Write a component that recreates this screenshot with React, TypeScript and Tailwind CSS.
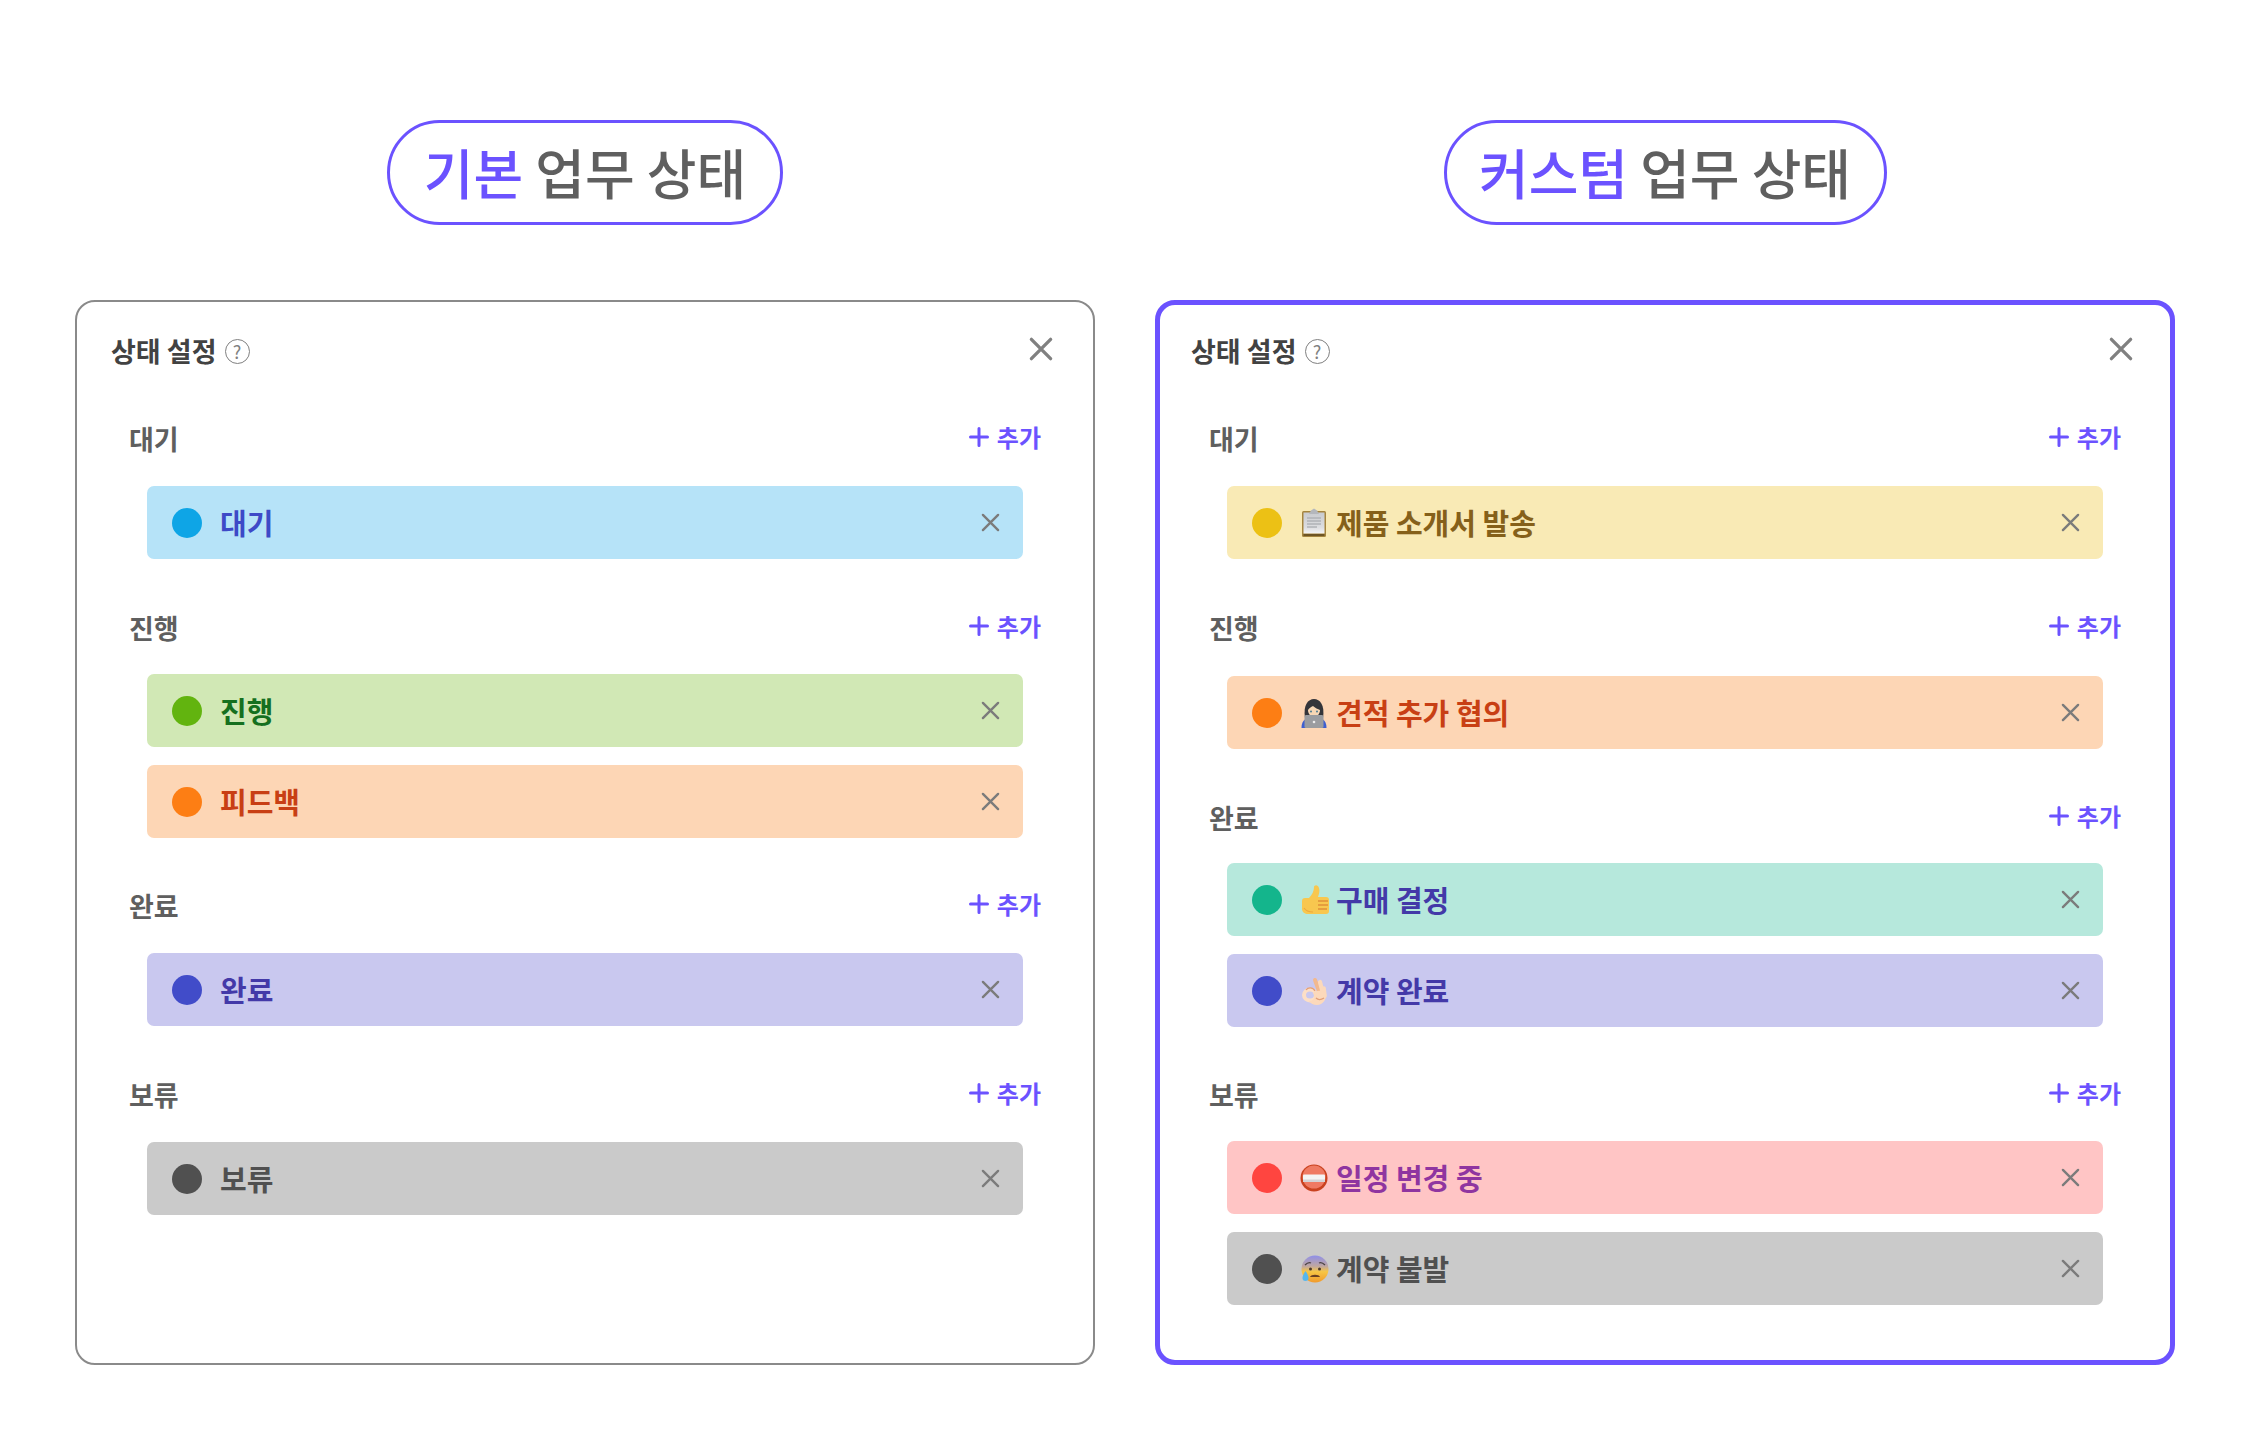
import React from "react";

const FONT = "[font-family:'Noto_Sans_CJK_KR','Noto_Sans',sans-serif]";

function XIcon({ size, stroke, color }: { size: number; stroke: number; color: string }) {
  return (
    <svg width={size} height={size} viewBox="0 0 20 20" fill="none" stroke={color} strokeWidth={stroke} strokeLinecap="round">
      <path d="M2 2 18 18M18 2 2 18" />
    </svg>
  );
}

function Clipboard() {
  return (
    <svg width="28" height="32" viewBox="0 0 28 32">
      <defs>
        <linearGradient id="clip" x1="0" y1="0" x2="0" y2="1">
          <stop offset="0" stopColor="#c9cbcf" />
          <stop offset="0.700" stopColor="#dcdde0" />
          <stop offset="1" stopColor="#f4f4f6" />
        </linearGradient>
      </defs>
      <rect x="2" y="4" width="24" height="26" rx="1.500" fill="#a5853f" />
      <rect x="3.500" y="5.500" width="21" height="21" fill="url(#clip)" />
      <path d="M3.500 27h21v2h-21z" fill="#6e5524" />
      <path d="M7 11h14M7 14h14M7 17h14M7 20h10" stroke="#b0b2b6" strokeWidth="1.300" />
      <path d="M9 7 11 3.500 14 1.500 17 3.500 19 7Z" fill="#b4b7bc" />
    </svg>
  );
}

function Laptop() {
  return (
    <svg width="28" height="32" viewBox="0 0 28 32">
      <path d="M5 21C3 8 8 2 14 2s11 6 9 19Z" fill="#34353a" />
      <path d="M8 13c1-2 3-3 5-4 2 2 5 3 7 4 0 4-3 7-6 7s-6-3-6-7Z" fill="#f7d7b5" />
      <circle cx="11" cy="14.500" r="1" fill="#4a7a92" />
      <circle cx="17" cy="14.500" r="1" fill="#4a7a92" />
      <path d="M1.500 31c0-4 1-7 4-9h17c3 2 4 5 4 9Z" fill="#3f5fd0" />
      <rect x="4.500" y="18" width="19" height="13" rx="1.500" fill="#9a9ca0" />
      <circle cx="14" cy="25" r="1.300" fill="#ececec" />
    </svg>
  );
}

function Thumb() {
  return (
    <svg width="30" height="32" viewBox="0 0 30 32">
      <path d="M2 17c0-2 1-3 3-3h4c3-3 5-7 5-11 0-2 4-3 5 1 1 3 0 6-1 9h8c2 0 3 1 3 3v11c0 2-1 3-3 3H8c-3 0-6-2-6-5Z" fill="#f8c74f" />
      <path d="M18 17h10M18 21h10M18 25h9" stroke="#e0913a" strokeWidth="1.400" />
      <path d="M4 24c2 3 5 4 9 4" stroke="#eda83e" strokeWidth="1.200" fill="none" />
    </svg>
  );
}

function OkHand() {
  return (
    <svg width="28" height="32" viewBox="0 0 28 32">
      <g fill="none" strokeLinecap="round">
        <ellipse cx="10" cy="20" rx="6" ry="5.500" stroke="#fddfc6" strokeWidth="4" />
        <path d="M15 5 19 16" stroke="#f2b98f" strokeWidth="4" />
        <path d="M20 7 23 19" stroke="#fcd9bb" strokeWidth="4.200" />
        <path d="M24 13 25 21" stroke="#fcd9bb" strokeWidth="3.600" />
      </g>
      <path d="M13 18c3-3 9-3 13 0 1 6-3 12-9 12-4 0-7-2-8-4 4 0 7-3 4-8Z" fill="#fcd9bb" />
      <path d="M6 15c2-3 7-3 9 1M16 23c2 2 5 2 8 0" stroke="#e39f78" strokeWidth="1.300" fill="none" />
    </svg>
  );
}

function NoEntry() {
  return (
    <svg width="28" height="28" viewBox="0 0 28 28">
      <circle cx="14" cy="14" r="13.500" fill="#c9421f" />
      <circle cx="14" cy="13" r="11.500" fill="#ef7a63" />
      <rect x="3" y="10.500" width="22" height="7.500" rx="1" fill="#f4f4f4" />
      <path d="M3 15.500h22v2.500H3z" fill="#d4d4d6" />
    </svg>
  );
}

function Anxious() {
  return (
    <svg width="30" height="30" viewBox="0 0 30 30">
      <defs>
        <linearGradient id="anx" x1="0" y1="0" x2="0" y2="1">
          <stop offset="0" stopColor="#8f8fe8" />
          <stop offset="0.400" stopColor="#c0a7a0" />
          <stop offset="0.600" stopColor="#f7c644" />
          <stop offset="1" stopColor="#f19a2c" />
        </linearGradient>
      </defs>
      <circle cx="15" cy="15" r="13.500" fill="url(#anx)" />
      <path d="M5 11c2-2 4-3 6-2M25 11c-2-2-4-3-6-2" stroke="#4c4342" strokeWidth="1.300" fill="none" />
      <circle cx="10.500" cy="15" r="1.500" fill="#4c3a2c" />
      <circle cx="19.500" cy="15" r="1.500" fill="#4c3a2c" />
      <path d="M10 23c1-3 9-3 10 0Z" fill="#6a4022" />
      <path d="M5.500 17C3.500 20 2.500 22 2.500 24a3 3 0 0 0 6 0C8.500 22 7.500 20 5.500 17Z" fill="#57b7ee" />
    </svg>
  );
}

type Row = {
  label: string;
  bg: string;
  dot: string;
  text: string;
  emoji?: React.ReactNode;
};

type Section = { name: string; rows: Row[]; mt: string; headMb: string };

const tones = {
  blue: { bg: "bg-[#b6e3f8]", dot: "bg-[#0ea5e6]", text: "text-[#3d49c7]" },
  green: { bg: "bg-[#d1e8b5]", dot: "bg-[#62b40f]", text: "text-[#15701f]" },
  orange: { bg: "bg-[#fdd6b5]", dot: "bg-[#fd7e14]", text: "text-[#c83f14]" },
  purple: { bg: "bg-[#c9c8ef]", dot: "bg-[#414cc9]", text: "text-[#4339a8]" },
  gray: { bg: "bg-[#cacaca]", dot: "bg-[#505050]", text: "text-[#505050]" },
  yellow: { bg: "bg-[#f9eab5]", dot: "bg-[#ecc115]", text: "text-[#85601a]" },
  teal: { bg: "bg-[#b6e8dc]", dot: "bg-[#14b58c]", text: "text-[#4339a8]" },
  red: { bg: "bg-[#ffc5c5]", dot: "bg-[#ff4540]", text: "text-[#8f35a0]" },
};

const leftSections: Section[] = [
  { name: "대기", mt: "mt-0", headMb: "mb-[27px]", rows: [{ label: "대기", ...tones.blue }] },
  { name: "진행", mt: "mt-[49px]", headMb: "mb-[26px]", rows: [{ label: "진행", ...tones.green }, { label: "피드백", ...tones.orange }] },
  { name: "완료", mt: "mt-[48px]", headMb: "mb-[27px]", rows: [{ label: "완료", ...tones.purple }] },
  { name: "보류", mt: "mt-[49px]", headMb: "mb-[27px]", rows: [{ label: "보류", ...tones.gray }] },
];

const rightSections: Section[] = [
  { name: "대기", mt: "mt-0", headMb: "mb-[27px]", rows: [{ label: "제품 소개서 발송", emoji: <Clipboard />, ...tones.yellow }] },
  { name: "진행", mt: "mt-[49px]", headMb: "mb-[28px]", rows: [{ label: "견적 추가 협의", emoji: <Laptop />, ...tones.orange }] },
  { name: "완료", mt: "mt-[49px]", headMb: "mb-[25px]", rows: [{ label: "구매 결정", emoji: <Thumb />, ...tones.teal }, { label: "계약 완료", emoji: <OkHand />, ...tones.purple }] },
  { name: "보류", mt: "mt-[48px]", headMb: "mb-[26px]", rows: [{ label: "일정 변경 중", emoji: <NoEntry />, ...tones.red }, { label: "계약 불발", emoji: <Anxious />, ...tones.gray }] },
];

function StatusRow({ row }: { row: Row }) {
  return (
    <div className={`flex h-[73px] items-center rounded-[7px] pl-[25px] pr-[23px] ${row.bg}`}>
      <span className={`h-[30px] w-[30px] shrink-0 rounded-full ${row.dot}`} />
      {row.emoji ? (
        <span className="ml-[18px] flex w-[36px] shrink-0 items-center justify-start">{row.emoji}</span>
      ) : (
        <span className="ml-[18px]" />
      )}
      <span className={`flex-1 text-[29px] font-bold leading-none ${row.text}`}>{row.label}</span>
      <XIcon size={19} stroke={2.5} color="#7b7b7b" />
    </div>
  );
}

function Panel({ sections, accent }: { sections: Section[]; accent: boolean }) {
  return (
    <div
      className={`h-[1065px] w-[1020px] rounded-[20px] bg-white ${
        accent ? "border-[5px] border-[#6b52ff] pl-[31px] pr-[37px] pt-[30px]" : "border-2 border-[#8a8a8a] pl-[34px] pr-[40px] pt-[33px]"
      }`}
    >
      <div className="flex items-center justify-between">
        <div className="flex items-center gap-[8px]">
          <span className="text-[27px] font-bold leading-[32px] text-[#424242]">상태 설정</span>
          <span className="flex h-[25px] w-[25px] items-center justify-center rounded-full border border-[#808080] text-[18px] leading-none text-[#808080]">?</span>
        </div>
        <span className="mb-[4px] flex">
          <XIcon size={24} stroke={2.8} color="#808080" />
        </span>
      </div>
      <div className="mt-[52px] pl-[18px]">
        {sections.map((s) => (
          <div key={s.name} className={s.mt}>
            <div className={`flex h-[40px] items-center justify-between pr-[12px] ${s.headMb}`}>
              <span className="mb-[2px] text-[27px] font-bold leading-none text-[#5f5f5f]">{s.name}</span>
              <span className="mb-[4px] flex items-center gap-[8px] text-[24px] font-bold leading-none text-[#6b52ff]">
                <svg width="20" height="20" viewBox="0 0 20 20" stroke="#6b52ff" strokeWidth="3" strokeLinecap="round">
                  <path d="M10 1.500v17M1.500 10h17" />
                </svg>
                추가
              </span>
            </div>
            <div className="ml-[18px] mr-[30px] flex flex-col gap-[18px]">
              {s.rows.map((r) => (
                <StatusRow key={r.label} row={r} />
              ))}
            </div>
          </div>
        ))}
      </div>
    </div>
  );
}

function Pill({ accent, width }: { accent: string; width: string }) {
  return (
    <div className={`flex h-[105px] ${width} items-center justify-center rounded-full border-[3px] border-[#6b52ff] pb-[2px] text-[54px] font-medium leading-none text-[#5f5f5f]`}>
      <span>
        <span className="text-[#6b52ff]">{accent}</span> 업무 상태
      </span>
    </div>
  );
}

export default function App() {
  return (
    <div className={`flex min-h-[1440px] w-[2250px] gap-[60px] bg-white pl-[75px] pt-[120px] ${FONT}`}>
      <div className="flex flex-col items-center">
        <Pill accent="기본" width="w-[396px]" />
        <div className="mt-[75px]">
          <Panel sections={leftSections} accent={false} />
        </div>
      </div>
      <div className="flex flex-col items-center">
        <Pill accent="커스텀" width="w-[443px]" />
        <div className="mt-[75px]">
          <Panel sections={rightSections} accent />
        </div>
      </div>
    </div>
  );
}
